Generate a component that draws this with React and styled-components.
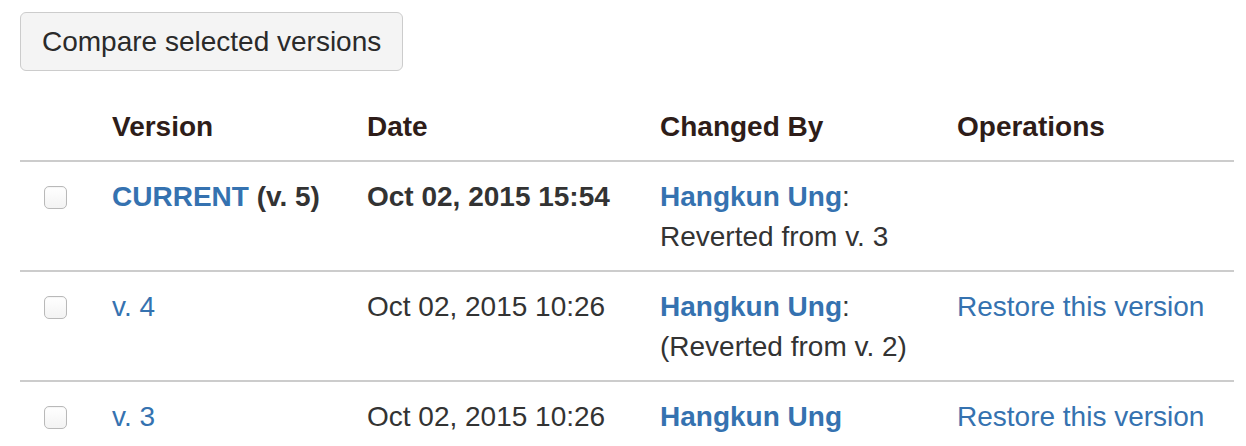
import React from "react"
import styled, { createGlobalStyle } from "styled-components"

const GlobalStyle = createGlobalStyle`
  html, body { margin: 0; padding: 0; background: #fff; }
  body {
    font-family: "Liberation Sans", Arial, Helvetica, sans-serif;
    font-size: 28px;
    line-height: 40px;
    color: #333;
  }
`

const Page = styled.div`
  padding: 12px 12px 0 20px;
`

const CompareButton = styled.button`
  display: block;
  box-sizing: border-box;
  height: 59px;
  padding: 1px 21px 0;
  margin: 0 0 21px;
  font-family: inherit;
  font-size: 28px;
  line-height: 56px;
  color: #2a2a2a;
  background: #f4f4f4;
  border: 1px solid #ccc;
  border-radius: 6px;
  cursor: pointer;
`

const Table = styled.table`
  width: 1214px;
  border-collapse: collapse;
  table-layout: fixed;
`

const Th = styled.th`
  text-align: left;
  font-weight: bold;
  color: #2e1d19;
  padding: 15px 24px 13px;
  border-bottom: 2px solid #ccc;
  vertical-align: top;
`

const Td = styled.td`
  padding: 15px 24px 13px;
  border-bottom: 2px solid #ccc;
  vertical-align: top;
  font-weight: ${p => (p.$bold ? "bold" : "normal")};
  white-space: nowrap;
`

const Check = styled.span`
  display: block;
  box-sizing: border-box;
  width: 23px;
  height: 23px;
  margin-top: 9px;
  border: 1px solid #b9b9b9;
  border-radius: 5px;
  background: linear-gradient(#fff, #f3f3f3);
  box-shadow: inset 0 1px 1px rgba(0, 0, 0, 0.04);
`

const Link = styled.a`
  color: #3572b0;
  text-decoration: none;
  font-weight: ${p => (p.$bold ? "bold" : "normal")};
`

const rows = [
  {
    version: <><Link href="#" $bold>CURRENT</Link> (v. 5)</>,
    bold: true,
    date: "Oct 02, 2015 15:54",
    comment: "Reverted from v. 3",
    restore: false,
  },
  {
    version: <Link href="#">v. 4</Link>,
    date: "Oct 02, 2015 10:26",
    comment: "(Reverted from v. 2)",
    restore: true,
  },
  {
    version: <Link href="#">v. 3</Link>,
    date: "Oct 02, 2015 10:26",
    comment: null,
    restore: true,
  },
]

export default function App() {
  return (
    <Page>
      <GlobalStyle />
      <CompareButton>Compare selected versions</CompareButton>
      <Table>
        <colgroup>
          <col style={{ width: 68 }} />
          <col style={{ width: 255 }} />
          <col style={{ width: 293 }} />
          <col style={{ width: 297 }} />
          <col />
        </colgroup>
        <thead>
          <tr>
            <Th />
            <Th>Version</Th>
            <Th>Date</Th>
            <Th>Changed By</Th>
            <Th>Operations</Th>
          </tr>
        </thead>
        <tbody>
          {rows.map((r, i) => (
            <tr key={i}>
              <Td><Check /></Td>
              <Td $bold={r.bold}>{r.version}</Td>
              <Td $bold={r.bold}>{r.date}</Td>
              <Td>
                <Link href="#" $bold>Hangkun Ung</Link>
                {r.comment && <>:<br />{r.comment}</>}
              </Td>
              <Td>{r.restore && <Link href="#">Restore this version</Link>}</Td>
            </tr>
          ))}
        </tbody>
      </Table>
    </Page>
  )
}
